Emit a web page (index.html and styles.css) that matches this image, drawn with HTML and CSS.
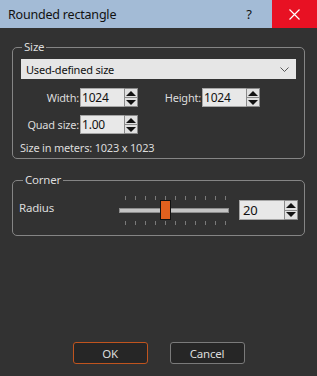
FILE: index.html
```html
<!DOCTYPE html>
<html lang="en">
<head>
    <meta charset="UTF-8">
    <title>Rounded rectangle</title>
    <link rel="stylesheet" href="styles.css">
</head>
<body>
    <div class="titlebar">
        <span class="title">Rounded rectangle</span>
        <span class="help">?</span>
        <span class="close">
            <svg width="11" height="11" viewBox="0 0 11 11"><path d="M0.5 0.5 L10.5 10.5 M10.5 0.5 L0.5 10.5" stroke="#fff" stroke-width="1.2" fill="none"/></svg>
        </span>
    </div>

    <div class="dialog">
        <fieldset class="group size-group">
            <legend>Size</legend>
            <div class="select">
                <span>Used-defined size</span>
                <svg width="9" height="5" viewBox="0 0 9 5"><path d="M0.5 0.5 L4.5 4.5 L8.5 0.5" stroke="#555" stroke-width="1" fill="none"/></svg>
            </div>
            <div class="fields">
                <label class="field-label">Width:</label>
                <div class="spin">
                    <div class="spin-value">1024</div>
                    <div class="spin-btns"><span class="arrow-up"></span><span class="arrow-down"></span></div>
                </div>
                <label class="field-label">Height:</label>
                <div class="spin">
                    <div class="spin-value">1024</div>
                    <div class="spin-btns"><span class="arrow-up"></span><span class="arrow-down"></span></div>
                </div>
                <label class="field-label">Quad size:</label>
                <div class="spin">
                    <div class="spin-value">1.00</div>
                    <div class="spin-btns"><span class="arrow-up"></span><span class="arrow-down"></span></div>
                </div>
            </div>
            <div class="meters">Size in meters: 1023 x 1023</div>
        </fieldset>

        <fieldset class="group corner-group">
            <legend>Corner</legend>
            <div class="radius-row">
                <span class="radius-label">Radius</span>
                <div class="slider">
                    <div class="ticks"><i></i><i></i><i></i><i></i><i></i><i></i><i></i><i></i><i></i><i></i><i></i></div>
                    <div class="track"><span class="thumb"></span></div>
                    <div class="ticks"><i></i><i></i><i></i><i></i><i></i><i></i><i></i><i></i><i></i><i></i><i></i></div>
                </div>
                <div class="spin spin-wide">
                    <div class="spin-value">20</div>
                    <div class="spin-btns"><span class="arrow-up"></span><span class="arrow-down"></span></div>
                </div>
            </div>
        </fieldset>
    </div>

    <div class="buttons">
        <button class="btn btn-ok">OK</button>
        <button class="btn">Cancel</button>
    </div>
</body>
</html>
```

FILE: styles.css
```css
* {
    margin: 0;
    padding: 0;
    box-sizing: border-box;
    font-family: "Noto Sans", "Liberation Sans", sans-serif;
    letter-spacing: -0.2px;
}

body {
    width: 317px;
    height: 376px;
    background-color: #323232;
    color: #dcdcdc;
    font-size: 11px;
    display: flex;
    flex-direction: column;
    overflow: hidden;
}

.titlebar {
    height: 28px;
    background-color: #a3bbd6;
    display: flex;
    align-items: center;
    color: #111;
}

.title {
    flex: 1;
    padding-left: 8px;
    font-size: 12.5px;
}

.help {
    width: 46px;
    text-align: center;
    font-size: 13px;
}

.close {
    width: 45px;
    height: 28px;
    background-color: #e81123;
    display: flex;
    align-items: center;
    justify-content: center;
}

.dialog {
    padding: 0 12px;
}

.group {
    border: 1px solid #858585;
    border-radius: 5px;
    width: 293px;
}

.group legend {
    line-height: 16px;
    padding: 0 2px;
    color: #dcdcdc;
    font-size: 11.5px;
}

.size-group {
    margin-top: 11px;
    padding: 4px 8px 3px 8px;
}

.size-group legend {
    margin-left: 1px;
}

.select {
    height: 20px;
    background-color: #e6e6e6;
    color: #111;
    display: flex;
    align-items: center;
    justify-content: space-between;
    padding: 0 7px 0 5px;
}

.fields {
    margin-top: 9px;
    display: grid;
    grid-template-columns: 59px 58px 64px 58px;
    grid-auto-rows: 19px;
    row-gap: 8px;
    align-items: center;
}

.field-label {
    text-align: right;
    white-space: nowrap;
    padding-right: 1px;
}

.spin {
    display: flex;
    height: 19px;
    width: 58px;
}

.spin-value {
    flex: 1;
    background-color: #e8e8e8;
    border: 1px solid #a6a6a6;
    border-right: none;
    color: #111;
    line-height: 17px;
    padding-left: 1px;
    font-size: 12px;
}

.spin-btns {
    width: 14px;
    background-color: #e0e0e0;
    border: 1px solid #8a8a8a;
    display: flex;
    flex-direction: column;
}

.spin-btns span {
    flex: 1;
    display: flex;
    align-items: center;
    justify-content: center;
}

.spin-btns .arrow-up {
    border-bottom: 1px solid #8a8a8a;
}

.arrow-up::before {
    content: "";
    border-left: 5px solid transparent;
    border-right: 5px solid transparent;
    border-bottom: 5px solid #111;
}

.arrow-down::before {
    content: "";
    border-left: 5px solid transparent;
    border-right: 5px solid transparent;
    border-top: 5px solid #111;
}

.meters {
    margin-top: 7px;
    line-height: 14px;
    margin-left: -1px;
}

.corner-group {
    margin-top: 13px;
    padding: 8px 6px 11px 6px;
}

.corner-group legend {
    margin-left: 4px;
}

.radius-row {
    display: flex;
    align-items: center;
    height: 28px;
}

.radius-label {
    width: 100px;
    padding-bottom: 6px;
    font-size: 11.5px;
}

.slider {
    width: 110px;
    display: flex;
    flex-direction: column;
    gap: 8px;
}

.ticks {
    height: 4px;
    display: flex;
    justify-content: space-between;
    padding: 0 3px 0 6px;
}

.ticks i {
    width: 1px;
    background-color: #7a7a7a;
}

.track {
    position: relative;
    height: 5px;
    background-color: #c4c4c4;
    border: 1px solid #8c8c8c;
}

.thumb {
    position: absolute;
    left: 40px;
    top: -9px;
    width: 11px;
    height: 20px;
    background-color: #e2601e;
    border: 1px solid #111;
}

.spin-wide {
    width: 59px;
    height: 20px;
    margin-left: 10px;
}

.spin-wide .spin-value {
    line-height: 18px;
    padding-left: 3px;
    font-size: 13px;
}

.buttons {
    margin-top: auto;
    padding-bottom: 12px;
    display: flex;
    justify-content: center;
    gap: 22px;
}

.btn {
    width: 75px;
    height: 22px;
    background-color: #262626;
    color: #dcdcdc;
    border: 1px solid #7a7a7a;
    border-radius: 3px;
    font-size: 11.5px;
}

.btn-ok {
    border-color: #c0541e;
}
```
